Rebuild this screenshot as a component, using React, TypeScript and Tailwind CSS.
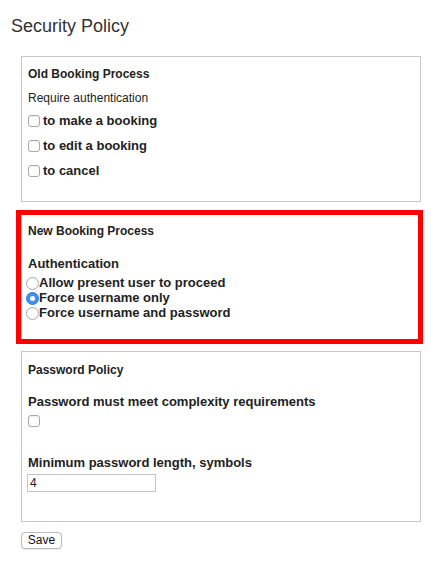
import React from "react";

function Checkbox() {
  return (
    <span className="inline-block w-[12px] h-[12px] shrink-0 rounded-[3px] border border-[#a8a8a8] bg-white shadow-[inset_0_1px_1px_rgba(0,0,0,0.06)]" />
  );
}

function Radio({ checked }: { checked?: boolean }) {
  if (checked) {
    return (
      <span className="flex items-center justify-center w-[13px] h-[13px] shrink-0 rounded-full bg-[#3b8ff5] border border-[#2f7fe6] translate-y-[1px]">
        <span className="block w-[5px] h-[5px] rounded-full bg-white" />
      </span>
    );
  }
  return (
    <span className="block w-[13px] h-[13px] shrink-0 rounded-full border border-[#a8a8a8] bg-white translate-y-[1px]" />
  );
}

export default function App() {
  return (
    <div className="w-[444px] h-[575px] bg-white text-[#222] font-['Liberation_Sans',Arial,Helvetica,sans-serif] pt-[16px]">
      <h1 className="pl-[11px] text-[18px] leading-[21px] font-normal text-[#333]">Security Policy</h1>

      <div className="ml-[21px] w-[400px] mt-[19px] border border-[#c8c8c8] px-[6px] pt-[10px] pb-[23px]">
        <div className="text-[12px] leading-[15px] font-bold">Old Booking Process</div>
        <div className="text-[12px] leading-[15px] mt-[9px]">Require authentication</div>
        <div className="flex items-center gap-[3px] mt-[7px] text-[13px] leading-[15px] font-bold">
          <Checkbox />
          <span>to make a booking</span>
        </div>
        <div className="flex items-center gap-[3px] mt-[10px] text-[13px] leading-[15px] font-bold">
          <Checkbox />
          <span>to edit a booking</span>
        </div>
        <div className="flex items-center gap-[3px] mt-[10px] text-[13px] leading-[15px] font-bold">
          <Checkbox />
          <span>to cancel</span>
        </div>
      </div>

      <div className="ml-[16px] w-[407px] mt-[8px] border-[5px] border-[#ff0000]">
        <div className="border-l border-[#c8c8c8] pl-[6px] pt-[9px] pb-[19px]">
          <div className="text-[12px] leading-[15px] font-bold">New Booking Process</div>
          <div className="text-[13px] leading-[15px] font-bold mt-[17px]">Authentication</div>
          <div className="mt-[4px] -ml-[2px] flex flex-col text-[13px] leading-[15px] font-bold">
            <div className="flex items-center">
              <Radio />
              <span>Allow present user to proceed</span>
            </div>
            <div className="flex items-center">
              <Radio checked />
              <span>Force username only</span>
            </div>
            <div className="flex items-center">
              <Radio />
              <span>Force username and password</span>
            </div>
          </div>
        </div>
      </div>

      <div className="ml-[21px] w-[400px] mt-[7px] border border-[#c8c8c8] px-[6px] pt-[11px] pb-[29px]">
        <div className="text-[12px] leading-[15px] font-bold">Password Policy</div>
        <div className="text-[13px] leading-[15px] font-bold mt-[16px]">Password must meet complexity requirements</div>
        <div className="mt-[6px] flex">
          <Checkbox />
        </div>
        <div className="text-[13px] leading-[15px] font-bold mt-[28px]">Minimum password length, symbols</div>
        <div className="mt-[4px] -ml-[1px] w-[129px] h-[18px] border border-[#c4c4c4] flex items-center px-[2px] text-[12px] leading-[14px]">
          4
        </div>
      </div>

      <div className="ml-[21px] mt-[10px] flex">
        <button className="w-[41px] h-[17px] rounded-[4px] border border-[#b9b9b9] bg-white shadow-[0_1px_1px_rgba(0,0,0,0.08)] text-[12px] leading-[15px] text-[#111] flex items-center justify-center">
          Save
        </button>
      </div>
    </div>
  );
}
